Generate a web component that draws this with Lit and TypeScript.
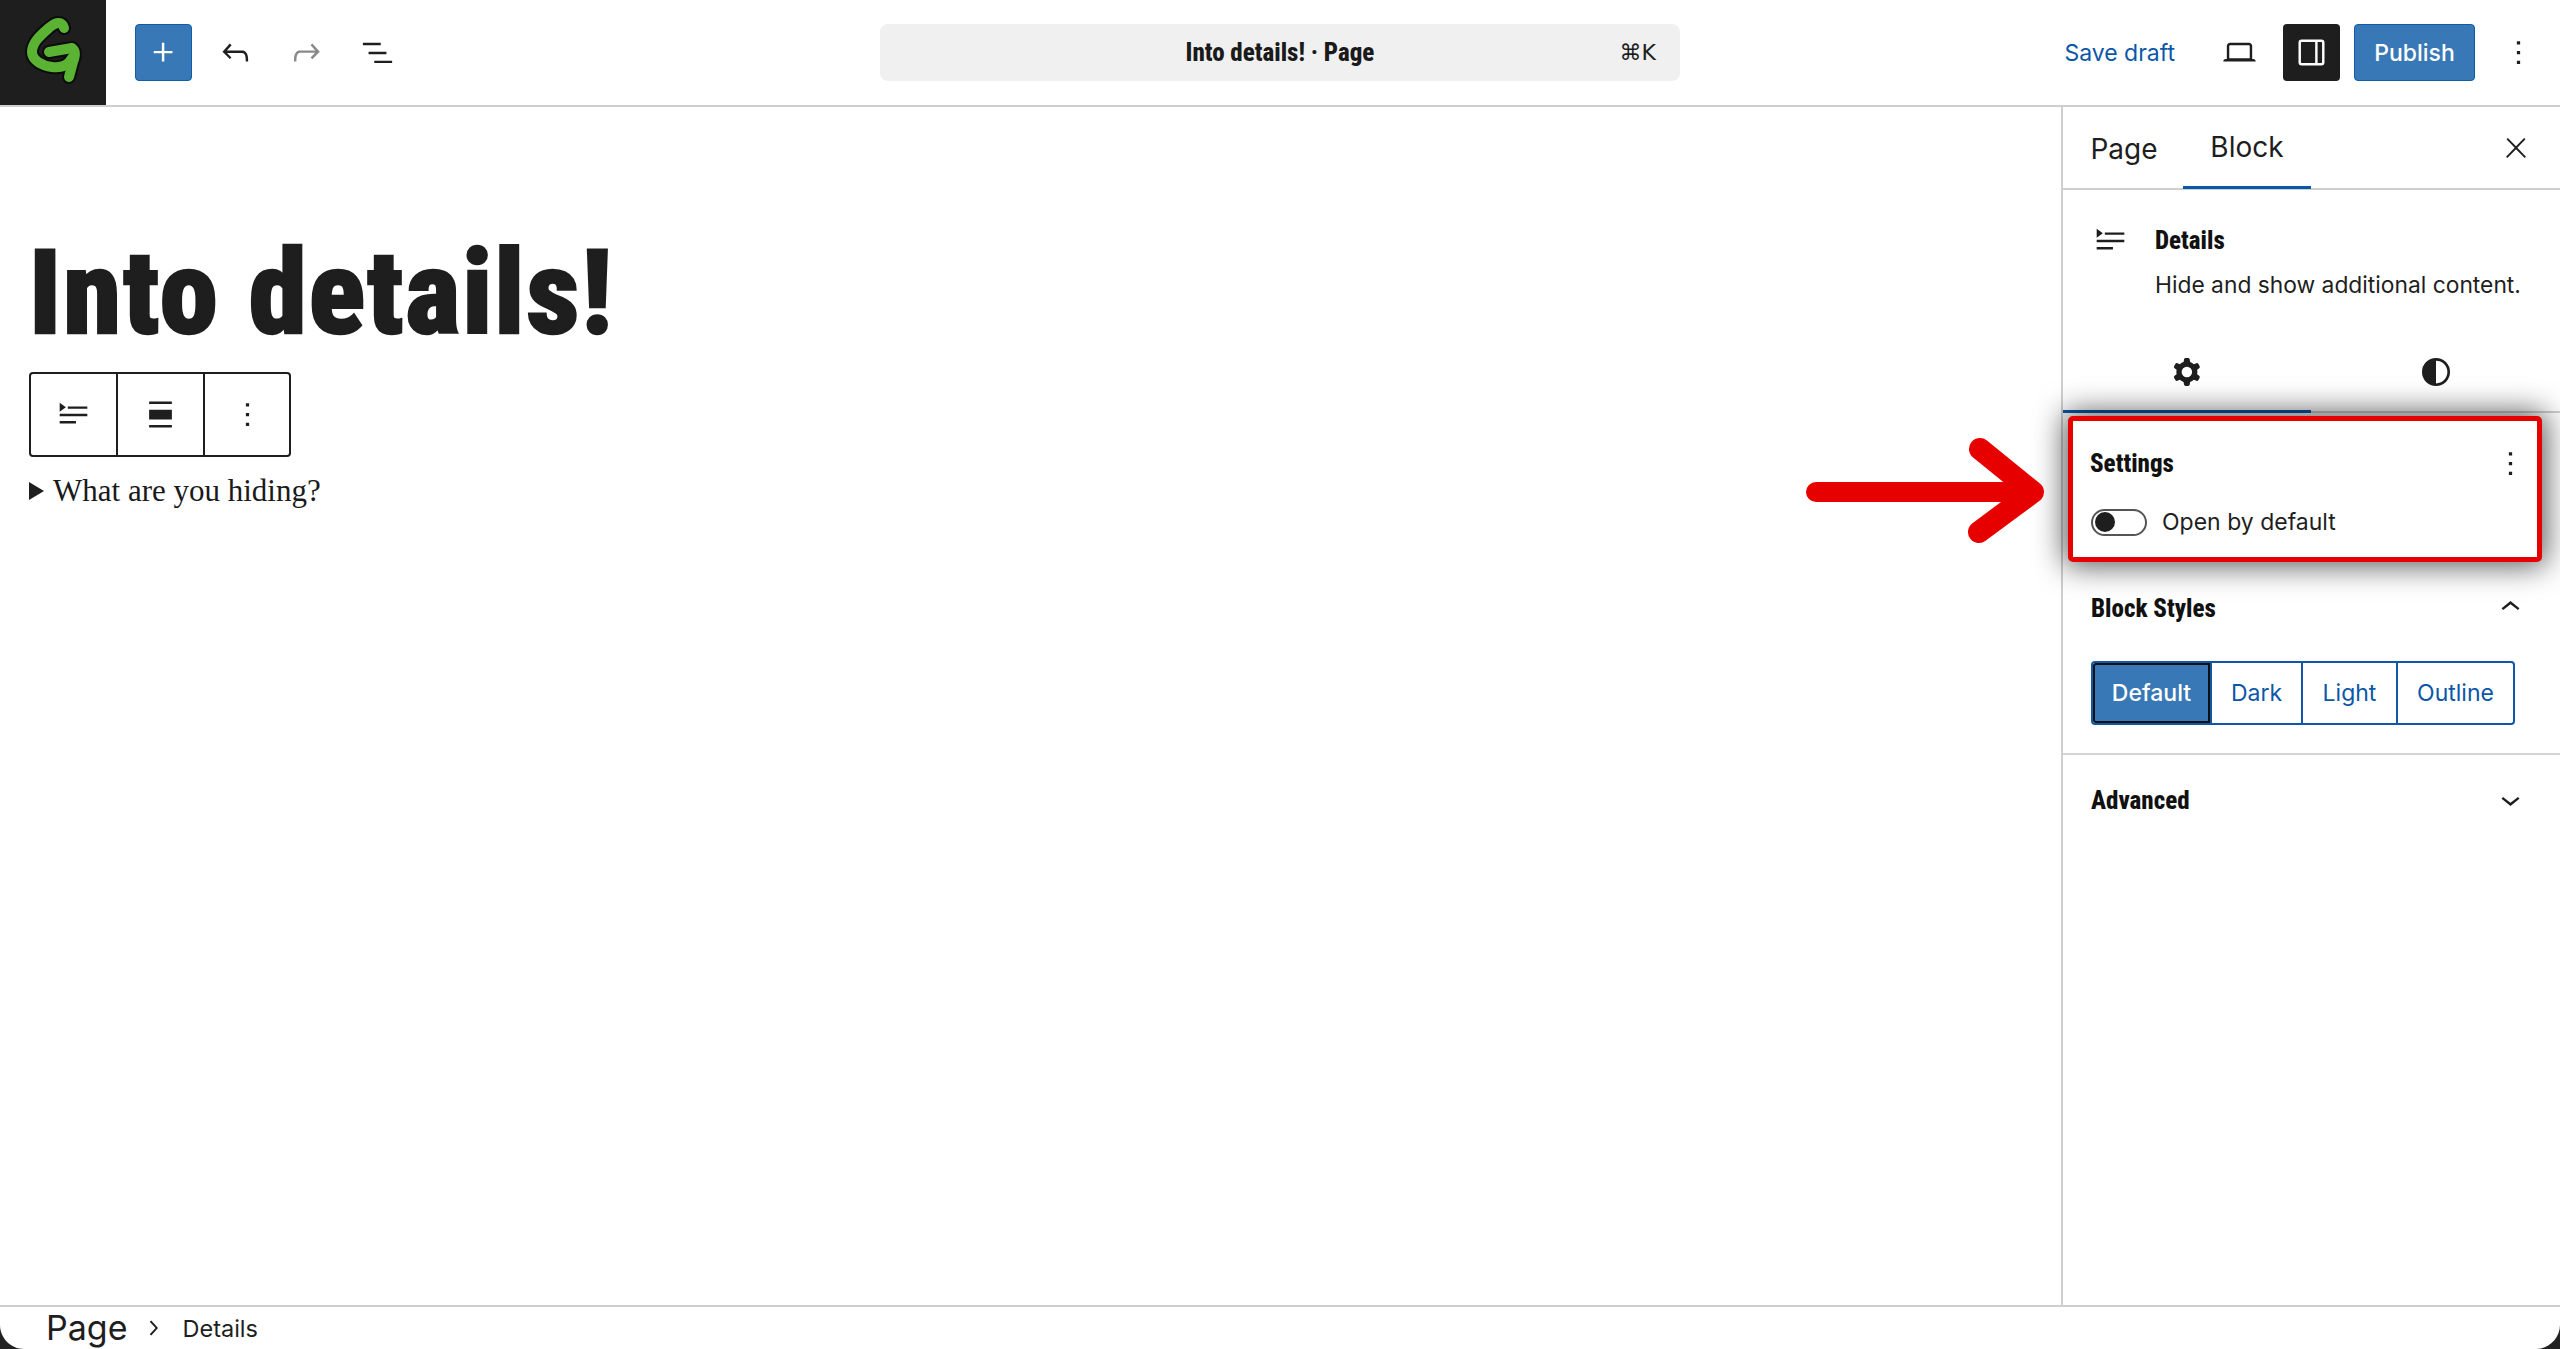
import { LitElement, html, css, svg } from "lit";
import { customElement } from "lit/decorators.js";

const P = {
  plus: "M11 12.5V17.5H12.5V12.5H17.5V11H12.5V6H11V11H6V12.5H11Z",
  undo: "M18.3 11.7c-.6-.6-1.4-.9-2.3-.9H6.7l2.9-3.3-1.1-1-4.5 5L8.5 16l1-1-2.7-2.7H16c.5 0 .9.2 1.3.5 1 1 1 3.4 1 4.5v.3h1.5v-.2c0-1.5 0-4.3-1.5-5.7z",
  redo: "M15.6 6.5l-1.1 1 2.9 3.3H8c-.9 0-1.7.3-2.3.9-1.4 1.5-1.4 4.2-1.4 5.6v.2h1.5v-.3c0-1.1 0-3.5 1-4.5.3-.3.7-.5 1.3-.5h9.2L14.5 15l1.1 1.1 4.6-4.6-4.6-5z",
  list: "M3 6h11v1.5H3V6zm3.5 5.5h11V13h-11v-1.5zM21 17H10v1.5h11V17z",
  more: "M13 19h-2v-2h2v2zm0-6h-2v-2h2v2zm0-6h-2V5h2v2z",
  laptop: "M20.5 16h-.7V8c0-1.1-.9-2-2-2H6.2c-1.1 0-2 .9-2 2v8h-.7c-.8 0-1.5.7-1.5 1.5h20c0-.8-.7-1.5-1.5-1.5zM5.7 8c0-.3.2-.5.5-.5h11.6c.3 0 .5.2.5.5v7.6H5.7V8z",
  close: "M13 11.8l6.1-6.3-1-1-6.1 6.2-6.1-6.2-1 1 6.1 6.3-6.5 6.7 1 1 6.5-6.6 6.5 6.6 1-1z",
  details: "M3.5 16h10v1.5h-10V16Zm0-4.5h17V13h-17v-1.5ZM8.5 7h12v1.5h-12V7ZM3.5 4.8v5.5l3.8-2.75z",
  wide: "M5 5.5h14V4H5zM5 20h14v-1.5H5zM5 9h14v6H5z",
  cog: "M10.289 4.836A1 1 0 0 1 11.275 4h1.306a1 1 0 0 1 .987.836l.244 1.466c.787.26 1.503.679 2.108 1.218l1.393-.522a1 1 0 0 1 1.216.437l.653 1.13a1 1 0 0 1-.23 1.273l-1.148.944a6.025 6.025 0 0 1 0 2.435l1.149.946a1 1 0 0 1 .23 1.272l-.653 1.13a1 1 0 0 1-1.216.437l-1.394-.522c-.605.54-1.32.958-2.108 1.218l-.244 1.466a1 1 0 0 1-.987.836h-1.306a1 1 0 0 1-.986-.836l-.244-1.466a5.995 5.995 0 0 1-2.108-1.218l-1.394.522a1 1 0 0 1-1.217-.436l-.653-1.131a1 1 0 0 1 .23-1.272l1.149-.946a6.026 6.026 0 0 1 0-2.435l-1.148-.944a1 1 0 0 1-.23-1.272l.653-1.131a1 1 0 0 1 1.217-.437l1.393.522a5.994 5.994 0 0 1 2.108-1.218l.244-1.466ZM14.929 12a3 3 0 1 1-6 0 3 3 0 0 1 6 0Z",
  half: "M12 4a8 8 0 1 0 0 16 8 8 0 0 0 0-16zm0 1.5a6.5 6.5 0 0 1 0 13z",
  up: "M6.5 12.4L12 8l5.5 4.4-.9 1.2L12 10l-4.5 3.6-1-1.2z",
  down: "M17.5 11.6L12 16l-5.5-4.4.9-1.2L12 14l4.6-3.6 1 1.2z",
  right: "M10.6 6L9.4 7l4.6 5-4.6 5 1.2 1 5.4-6z",
};

const icon = (d: string, size = 39, cls = "") =>
  html`<svg class="ic ${cls}" width=${size} height=${size} viewBox="0 0 24 24" fill-rule="evenodd">${svg`<path d=${d}></path>`}</svg>`;

@customElement("app-root")
export class AppRoot extends LitElement {
  static styles = css`
    :host {
      display: flex;
      flex-direction: column;
      position: relative;
      width: 2560px;
      height: 1349px;
      overflow: hidden;
      background: #fff;
      color: #1e1e1e;
      font-family: Inter, "Liberation Sans", sans-serif;
    }
    .ic { display: block; fill: currentColor; flex: none; }
    .cond {
      font-family: Roboto, "Liberation Sans", sans-serif;
      font-weight: 800;
      font-stretch: 75%;
    }
    header {
      height: 107px;
      flex: none;
      display: grid;
      grid-template-columns: 1fr 800px 1fr;
      align-items: center;
      border-bottom: 2px solid #cfcfcf;
      box-sizing: border-box;
    }
    .left { display: flex; align-items: center; height: 100%; }
    .logo { width: 106px; height: 105px; background: #1e1e1e; flex: none; display: block; }
    .plus {
      width: 57px; height: 57px; margin-left: 29px; margin-right: 23px;
      background: #3878b6; border: 1px solid #0f5ca8; border-radius: 4px; color: #fff;
      display: flex; align-items: center; justify-content: center; box-sizing: border-box;
    }
    .tool { width: 40px; display: flex; justify-content: center; margin-right: 31px; }
    .tool.off { color: #8a8a8a; }
    .command {
      height: 57px; background: #f0f0f0; border-radius: 8px; position: relative;
      display: flex; align-items: center; justify-content: center; font-size: 24px;
    }
    .command .title { font-size: 25px; color: #1a1a1a; }
    .command .kbd { position: absolute; right: 24px; font-size: 22px; font-family: "DejaVu Sans", Inter, sans-serif; }
    .right { display: flex; align-items: center; justify-content: flex-end; padding-right: 22px; }
    .save { font-size: 23px; color: #0b57a8; margin-right: 45px; }
    .view {
      width: 57px; height: 57px; border-radius: 4px; background: #1e1e1e; color: #fff;
      display: flex; align-items: center; justify-content: center; margin-left: 24px; margin-right: 14px;
    }
    .publish {
      width: 121px; height: 57px; box-sizing: border-box; border-radius: 4px; background: #3878b6;
      border: 1px solid #0f5ca8; color: #fff; font-size: 23px; font-weight: 500;
      display: flex; align-items: center; justify-content: center; margin-right: 24px;
    }
    main { flex: 1; display: flex; min-height: 0; }
    .canvas { flex: 1; padding-left: 29px; min-width: 0; }
    h1 {
      margin: 125px 0 0 0; font-size: 117px; line-height: 122px; color: #1e1e1e; font-weight: 900;
      white-space: nowrap; letter-spacing: 2.05px; -webkit-text-stroke: 2.5px #1e1e1e;
    }
    .blocktools {
      display: flex; width: fit-content; height: 85px; margin-top: 18px; border: 2px solid #1e1e1e; border-radius: 4px;
      box-sizing: border-box;
    }
    .blocktools div { width: 85px; display: flex; align-items: center; justify-content: center; border-left: 2px solid #1e1e1e; }
    .blocktools div:first-child { border-left: 0; width: 85px; }
    .blocktools div:last-child { width: 84px; }
    .summary {
      display: flex; align-items: center; gap: 9px; margin-top: 14px; height: 40px;
      font-family: "Liberation Serif", serif; font-size: 31px; color: #1a1a1a;
    }
    .tri { width: 0; height: 0; border-left: 15px solid #1e1e1e; border-top: 9px solid transparent; border-bottom: 9px solid transparent; }
    aside { width: 499px; flex: none; border-left: 2px solid #cfcfcf; box-sizing: border-box; }
    .tabs { height: 83px; display: flex; border-bottom: 2px solid #cfcfcf; box-sizing: border-box; position: relative; align-items: center; }
    .tab { font-size: 28px; height: 100%; display: flex; align-items: center; justify-content: center; padding-top: 2px; box-sizing: border-box; }
    .tab.page { margin-left: 29px; width: 64px; }
    .tab.block { margin-left: 27px; width: 128px; border-bottom: 3px solid #0b57a8; height: 83px; }
    .x { margin-left: auto; margin-right: 28px; margin-top: 1px; }
    .card { height: 168px; position: relative; box-sizing: border-box; }
    .card .row { display: flex; padding: 36px 0 0 28px; gap: 25px; }
    .card .row .ic { margin-top: -5px; }
    .card .t { font-size: 25px; line-height: 30px; color: #111; }
    .card .d { font-size: 22.8px; line-height: 30px; margin-top: 14px; white-space: nowrap; color: #1e1e1e; }
    .subtabs { display: flex; border-bottom: 2px solid #cfcfcf; box-sizing: border-box; margin-top: -7px; height: 62px; }
    .sub { width: 249px; display: flex; align-items: flex-start; justify-content: center; box-sizing: border-box; }
    .sub.on { width: 248px; border-bottom: 3px solid #0b57a8; height: 62px; }
    .highlight {
      position: relative; z-index: 2; margin: 3px 18px 0 5px; height: 146px; box-sizing: border-box; background: #fff;
      border: 5px solid #e60000; border-radius: 5px; box-shadow: 0 0 30px 4px rgba(0,0,0,.65);
      padding: 0 0 0 17px;
    }
    .hrow { display: flex; align-items: center; justify-content: space-between; height: 50px; padding-top: 17px; padding-right: 7px; }
    .h { font-size: 25px; color: #111; }
    .toggle { display: flex; align-items: center; gap: 15px; margin: 15px 0 0 1px; font-size: 23px; height: 38px; }
    .switch { width: 56px; height: 27px; border: 2px solid #555; border-radius: 14px; box-sizing: border-box; padding: 2px; display: flex; align-items: center; }
    .knob { width: 20px; height: 20px; border-radius: 50%; background: #1e1e1e; }
    .rule { height: 2px; background: #d4d4d4; }
    .section { padding: 0 30px 0 28px; }
    .shead { display: flex; align-items: center; justify-content: space-between; height: 90px; }
    .shead .h { margin-top: 2px; }
    .styles {
      display: flex; height: 64px; border: 2px solid #0f57a8; border-radius: 4px; box-sizing: border-box; width: 424px;
      font-size: 23px; color: #0b57a8; margin-top: 9px;
    }
    .styles div { display: flex; align-items: center; justify-content: center; border-left: 2px solid #0f57a8; }
    .styles .sel { background: #3878b6; color: #fff; border-left: 0; width: 117px; outline: 2px solid #111; outline-offset: -2px; border-radius: 3px 0 0 3px; font-weight: 500; }
    .styles .dark { width: 89px; }
    .styles .light { width: 93px; }
    .styles .outline { flex: 1; }
    .adv { height: 88px; }
    footer {
      height: 44px; flex: none; border-top: 2px solid #cfcfcf; box-sizing: border-box; display: flex; align-items: center;
      padding-left: 46px;
    }
    .crumb { font-size: 34px; line-height: 42px; }
    .crumb2 { font-size: 23.5px; }
    .chev { margin: 0 14px 0 11px; }
    .arrow { position: absolute; left: 1800px; top: 430px; z-index: 3; display: block; }
    .corner { position: absolute; bottom: 0; width: 24px; height: 24px; z-index: 4; display: block; }
    .corner.l { left: 0; }
    .corner.r { right: 0; transform: scaleX(-1); }
  `;

  render() {
    return html`
      <header>
        <div class="left">
          <svg class="logo" viewBox="0 0 106 105">
            <g fill="none" stroke-linecap="round" stroke-linejoin="round">
              <g stroke="#0c0c0c" stroke-width="14">
                <path d="M64 28C62 21 56 22 50 27C42 34 32 42 32 52C32 60 42 66 52 67C60 68 68 66 72 58"></path>
                <path d="M49 52L72 48C76 51 75 57 73 62L69 77"></path>
              </g>
              <g stroke="#5bb333" stroke-width="10">
                <path d="M64 28C62 21 56 22 50 27C42 34 32 42 32 52C32 60 42 66 52 67C60 68 68 66 72 58"></path>
                <path d="M49 52L72 48C76 51 75 57 73 62L69 77"></path>
              </g>
            </g>
          </svg>
          <div class="plus">${icon(P.plus)}</div>
          <div class="tool">${icon(P.undo)}</div>
          <div class="tool off">${icon(P.redo)}</div>
          <div class="tool">${icon(P.list)}</div>
        </div>
        <div class="command">
          <span class="title cond">Into details! · Page</span>
          <span class="kbd">⌘K</span>
        </div>
        <div class="right">
          <span class="save">Save draft</span>
          ${icon(P.laptop)}
          <div class="view">
            <svg width="39" height="39" viewBox="0 0 24 24" fill="none" stroke="#fff" stroke-width="1.5">
              <rect x="4.75" y="4.75" width="14.5" height="14.5" rx="1.2"></rect>
              <path d="M15 4.75V19.25"></path>
            </svg>
          </div>
          <div class="publish">Publish</div>
          ${icon(P.more)}
        </div>
      </header>
      <main>
        <div class="canvas">
          <h1 class="cond">Into details!</h1>
          <div class="blocktools">
            <div>${icon(P.details)}</div>
            <div>${icon(P.wide)}</div>
            <div>${icon(P.more)}</div>
          </div>
          <div class="summary"><span class="tri"></span><span>What are you hiding?</span></div>
        </div>
        <aside>
          <div class="tabs">
            <div class="tab page">Page</div>
            <div class="tab block">Block</div>
            <div class="x">${icon(P.close, 32)}</div>
          </div>
          <div class="card">
            <div class="row">
              ${icon(P.details)}
              <div>
                <div class="t cond">Details</div>
                <div class="d">Hide and show additional content.</div>
              </div>
            </div>
          </div>
          <div class="subtabs">
            <div class="sub on">${icon(P.cog, 42)}</div>
            <div class="sub">${icon(P.half, 42)}</div>
          </div>
          <div class="highlight">
            <div class="hrow"><span class="h cond">Settings</span>${icon(P.more)}</div>
            <div class="toggle"><span class="switch"><span class="knob"></span></span><span>Open by default</span></div>
          </div>
          <div class="section">
            <div class="shead"><span class="h cond">Block Styles</span>${icon(P.up)}</div>
            <div class="styles">
              <div class="sel">Default</div>
              <div class="dark">Dark</div>
              <div class="light">Light</div>
              <div class="outline">Outline</div>
            </div>
          </div>
          <div class="rule" style="margin-top:28px"></div>
          <div class="section">
            <div class="shead adv"><span class="h cond">Advanced</span>${icon(P.down)}</div>
          </div>
        </aside>
      </main>
      <footer>
        <span class="crumb">Page</span>
        <span class="chev">${icon(P.right, 30)}</span>
        <span class="crumb2">Details</span>
      </footer>
      <svg class="arrow" width="250" height="120" viewBox="0 0 250 120" fill="none" stroke="#e60000" stroke-linecap="round" stroke-linejoin="round">
        <path d="M16 62H225" stroke-width="20"></path>
        <path d="M180 19L233 62L179 102" stroke-width="22"></path>
      </svg>
      <svg class="corner l" viewBox="0 0 24 24"><path d="M0 0C0 13 11 24 24 24H0Z" fill="#222"></path></svg>
      <svg class="corner r" viewBox="0 0 24 24"><path d="M0 0C0 13 11 24 24 24H0Z" fill="#222"></path></svg>
    `;
  }
}
